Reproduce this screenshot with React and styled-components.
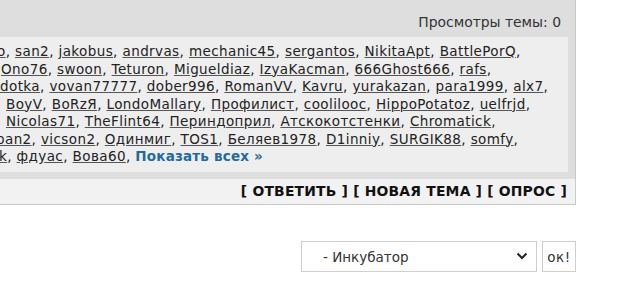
import React from "react";
import styled, { createGlobalStyle } from "styled-components";

const Global = createGlobalStyle`
  html, body { margin: 0; padding: 0; background: #ffffff; overflow: hidden; }
  body { font-family: "DejaVu Sans", Verdana, sans-serif; font-size: 13px; color: #222; }
`;

const Page = styled.div`
  width: 640px;
  height: 296px;
  display: flex;
  flex-direction: column;
`;

const Panel = styled.div`
  width: 575px;
  border-right: 1px solid #c9c9c9;
  background: #dedede;
  display: flex;
  flex-direction: column;
`;

const Header = styled.div`
  height: 37px;
  box-sizing: border-box;
  padding: 14px 14px 0 0;
  text-align: right;
  line-height: 16px;
  font-size: 13.9px;
  color: #333;
`;

const Users = styled.div`
  margin-right: 7px;
  height: 135px;
  box-sizing: border-box;
  padding-top: 6px;
  background: #eeeeee;
  overflow: hidden;
  font-size: 13.5px;
  letter-spacing: 0.4px;
`;

const Line = styled.div`
  white-space: nowrap;
  line-height: 17.5px;
  margin-left: ${(p) => p.$indent}px;
`;

const Name = styled.a`
  color: #222;
  text-decoration: underline;
  text-decoration-color: #555;
`;

const ShowAll = styled.a`
  color: #1f6a9e;
  font-weight: bold;
  text-decoration: none;
  letter-spacing: 0.2px;
`;

const Spacer = styled.div`
  height: 7px;
`;

const Bar = styled.div`
  height: 26px;
  box-sizing: border-box;
  background: #f2f2f2;
  border-bottom: 1px solid #c9c9c9;
  padding-right: 8px;
  text-align: right;
  line-height: 25px;
  font-weight: bold;
  font-size: 13.9px;
  color: #111;
  letter-spacing: 0.2px;
`;

const Form = styled.div`
  width: 576px;
  margin-top: 36px;
  display: flex;
  justify-content: flex-end;
  gap: 5px;
`;

const SelectWrap = styled.div`
  position: relative;
  width: 236px;
  height: 31px;
`;

const Select = styled.select`
  appearance: none;
  width: 100%;
  height: 100%;
  box-sizing: border-box;
  border: 1px solid #cfcfcf;
  background: #fff;
  font-family: "DejaVu Sans", Verdana, sans-serif;
  font-size: 13.5px;
  color: #333;
  padding: 0 0 0 21px;
  outline: none;
`;

const Chevron = styled.svg`
  position: absolute;
  right: 9px;
  top: 11px;
  pointer-events: none;
`;

const OkButton = styled.button`
  width: 34px;
  height: 31px;
  box-sizing: border-box;
  border: 1px solid #cfcfcf;
  background: #fff;
  font-family: "DejaVu Sans", Verdana, sans-serif;
  font-size: 13.5px;
  color: #333;
  padding: 0;
  letter-spacing: 0.5px;
`;

const lines = [
  { indent: -3, names: ["o", "san2", "jakobus", "andrvas", "mechanic45", "sergantos", "NikitaApt", "BattlePorQ"] },
  { indent: 1, names: ["Ono76", "swoon", "Teturon", "Migueldiaz", "IzyaKacman", "666Ghost666", "rafs"] },
  { indent: 0, names: ["dotka", "vovan77777", "dober996", "RomanVV", "Kavru", "yurakazan", "para1999", "alx7"] },
  { indent: 6, names: ["BoyV", "BoRzЯ", "LondoMallary", "Профилист", "coolilooc", "HippoPotatoz", "uelfrjd"] },
  { indent: 6, names: ["Nicolas71", "TheFlint64", "Периндоприл", "Атскокотстенки", "Chromatick"] },
  { indent: -4, names: ["pan2", "vicson2", "Одинмиг", "TOS1", "Беляев1978", "D1inniy", "SURGIK88", "somfy"] },
];

export default function App() {
  return (
    <Page>
      <Global />
      <Panel>
        <Header>Просмотры темы: 0</Header>
        <Users>
          {lines.map((l, i) => (
            <Line key={i} $indent={l.indent}>
              {l.names.map((n, j) => (
                <React.Fragment key={j}>
                  <Name href="#">{n}</Name>
                  {", "}
                </React.Fragment>
              ))}
            </Line>
          ))}
          <Line $indent={-1}>
            <Name href="#">k</Name>, <Name href="#">фдуас</Name>, <Name href="#">Вова60</Name>,{" "}
            <ShowAll href="#">Показать всех »</ShowAll>
          </Line>
        </Users>
        <Spacer />
        <Bar>[ ОТВЕТИТЬ ] [ НОВАЯ ТЕМА ] [ ОПРОС ]</Bar>
      </Panel>
      <Form>
        <SelectWrap>
          <Select defaultValue="inc">
            <option value="inc">- Инкубатор</option>
          </Select>
          <Chevron width="12" height="8" viewBox="0 0 12 8">
            <path d="M1.5 1.5 L6 6 L10.5 1.5" fill="none" stroke="#222" strokeWidth="2" />
          </Chevron>
        </SelectWrap>
        <OkButton>ок!</OkButton>
      </Form>
    </Page>
  );
}
